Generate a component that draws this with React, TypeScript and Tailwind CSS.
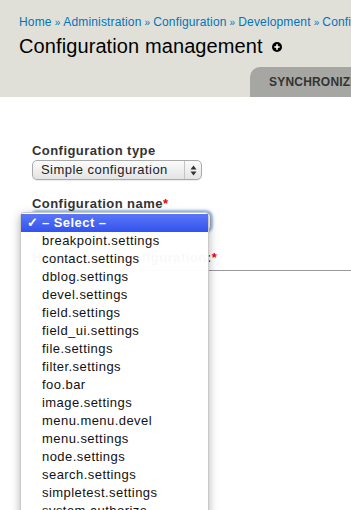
const ITEMS = [
  'breakpoint.settings',
  'contact.settings',
  'dblog.settings',
  'devel.settings',
  'field.settings',
  'field_ui.settings',
  'file.settings',
  'filter.settings',
  'foo.bar',
  'image.settings',
  'menu.menu.devel',
  'menu.settings',
  'node.settings',
  'search.settings',
  'simpletest.settings',
  'system.authorize',
];

const CRUMBS = ['Home', 'Administration', 'Configuration', 'Development', 'Configuration'];

function PlusCircle() {
  return (
    <svg width="10" height="10" viewBox="0 0 10 10" className="ml-[9px] mt-[2px] shrink-0">
      <circle cx="5" cy="5" r="5" fill="#000" />
      <path d="M5 2.3v5.4M2.3 5h5.4" stroke="#fff" strokeWidth="1.6" />
    </svg>
  );
}

function Arrows() {
  return (
    <svg width="7" height="11" viewBox="0 0 7 11">
      <path d="M3.5 0.5L6.5 4.5H0.5Z" fill="#333" />
      <path d="M3.5 10.5L6.5 6.5H0.5Z" fill="#333" />
    </svg>
  );
}

export default function App() {
  return (
    <div
      className="relative w-[351px] h-[510px] overflow-hidden bg-white text-[#333]"
      style={{ fontFamily: '"Liberation Sans", Arial, sans-serif' }}
    >
      <header className="bg-[#e0e0d8] h-[97px] pt-[15px] pl-[19px]">
        <nav className="h-[14px] text-[12px] leading-[14px] whitespace-nowrap text-[#0074bd] tracking-[0.15px]">
          {CRUMBS.map((c, i) => (
            <span key={i}>
              {i > 0 && <span className="mx-[3px] text-[10px]">»</span>}
              {c}
            </span>
          ))}
        </nav>
        <div className="mt-[5px] flex items-center h-[24px]">
          <h1 className="text-[20px] leading-[24px] text-black tracking-[0.1px]">Configuration management</h1>
          <PlusCircle />
        </div>
        <div className="mt-[9px] flex">
          <div className="ml-[231px] shrink-0 w-[140px] h-[30px] bg-[#a6a7a2] rounded-tl-[10px] pl-[19px] flex items-center">
            <span className="text-[12px] font-bold text-[#333] tracking-[0.2px]">SYNCHRONIZE</span>
          </div>
        </div>
      </header>

      <main className="pt-[46px] text-[13px] tracking-[0.45px]">
        <div className="px-[32px]">
          <label className="block leading-[16px] font-bold text-[#333]">Configuration type</label>
          <div className="mt-[1px] w-[170px] h-[20px] rounded-[5px] border border-[#a9a9a9] bg-gradient-to-b from-[#fbfbfb] to-[#e4e4e4] flex items-center shadow-[0_1px_1px_rgba(0,0,0,0.08)]">
            <span className="flex-1 pl-[8px] text-[#222] leading-[18px]">Simple configuration</span>
            <span className="w-[17px] h-full border-l border-[#c4c4c4] flex items-center justify-center">
              <Arrows />
            </span>
          </div>

          <label className="block mt-[16px] leading-[16px] font-bold text-[#333]">
            Configuration name<span className="text-[#e00]">*</span>
          </label>
          <div className="w-[179px] h-[19px] rounded-[5px] border border-[#a9a9a9] bg-white shadow-[0_0_2px_2px_rgba(90,150,220,0.6)]" />

          <label className="block mt-[19px] leading-[16px] font-bold text-[#333] tracking-[0.5px]">
            Here is your configuration:<span className="text-[#e00]">*</span>
          </label>
        </div>
        <div className="mt-[4px] ml-[32px] h-[241px] border-t border-b border-[#999] bg-white" />
      </main>

      <div className="absolute left-[20px] top-[212px] w-[189px] h-[320px] bg-white/[0.97] border border-[#c9c9c9] rounded-[4px] shadow-[0_3px_10px_rgba(0,0,0,0.3)] pt-[1px] text-[13px] tracking-[0.45px]">
        <div className="h-[18px] bg-gradient-to-b from-[#5b76f6] to-[#3352ee] flex items-center text-white font-bold">
          <span className="w-[21px] pl-[6px]">✓</span>
          <span>– Select –</span>
        </div>
        {ITEMS.map(item => (
          <div key={item} className="h-[18px] pl-[21px] flex items-center text-[#111]">
            {item}
          </div>
        ))}
      </div>
    </div>
  );
}
